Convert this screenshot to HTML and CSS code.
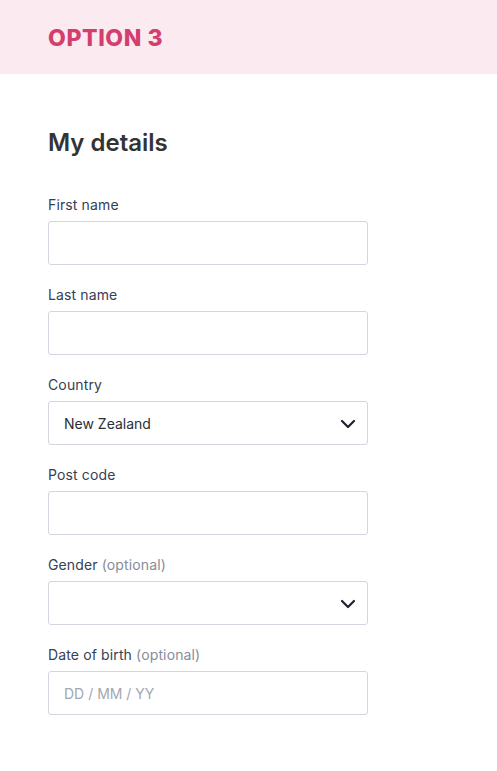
FILE: index.html
```html
<!DOCTYPE html>
<html lang="en">
<head>
<meta charset="utf-8">
<title>Option 3</title>
<link rel="stylesheet" href="styles.css">
</head>
<body>
<header class="banner">
  <h1 class="banner-title">OPTION 3</h1>
</header>
<main class="content">
  <h2 class="heading">My details</h2>
  <form class="form">
    <div class="field">
      <label class="label">First name</label>
      <div class="input"></div>
    </div>
    <div class="field">
      <label class="label">Last name</label>
      <div class="input"></div>
    </div>
    <div class="field">
      <label class="label">Country</label>
      <div class="input select">
        <span class="value">New Zealand</span>
        <svg class="chevron" width="16" height="10" viewBox="0 0 16 10"><path d="M2 2 L8 8 L14 2" fill="none" stroke="#1f2330" stroke-width="2.2" stroke-linecap="round" stroke-linejoin="round"/></svg>
      </div>
    </div>
    <div class="field">
      <label class="label">Post code</label>
      <div class="input"></div>
    </div>
    <div class="field">
      <label class="label">Gender <span class="optional">(optional)</span></label>
      <div class="input select">
        <span class="value"></span>
        <svg class="chevron" width="16" height="10" viewBox="0 0 16 10"><path d="M2 2 L8 8 L14 2" fill="none" stroke="#1f2330" stroke-width="2.2" stroke-linecap="round" stroke-linejoin="round"/></svg>
      </div>
    </div>
    <div class="field">
      <label class="label">Date of birth <span class="optional">(optional)</span></label>
      <div class="input"><span class="placeholder">DD / MM / YY</span></div>
    </div>
  </form>
</main>
</body>
</html>
```
FILE: styles.css
```css
* { box-sizing: border-box; }
html, body { margin: 0; padding: 0; background: #ffffff; }
body { font-family: Inter, "Noto Sans", sans-serif; color: #333333; }

.banner {
  background: #fbeaf0;
  height: 74px;
  padding: 0 48px;
  display: flex;
  align-items: center;
}
.banner-title {
  margin: 0;
  font-size: 23px;
  font-weight: 800;
  color: #d23f6e;
  letter-spacing: 0.6px;
  line-height: 1;
  padding-top: 2px;
}

.content { padding: 53px 48px 0; }
.heading {
  margin: 0 0 36px;
  font-size: 24px;
  font-weight: 600;
  color: #333333;
  line-height: 32px;
}

.form { display: flex; flex-direction: column; gap: 20px; width: 320px; }
.field { display: flex; flex-direction: column; gap: 6px; }
.label {
  font-size: 14px;
  line-height: 20px;
  color: #364055;
  font-weight: 400;
  letter-spacing: 0.13px;
}
.optional { color: #868c9a; }

.input {
  height: 44px;
  border: 1px solid #d3d5df;
  border-radius: 3px;
  background: #fff;
  display: flex;
  align-items: center;
  padding: 0 15px;
  font-size: 14px;
  color: #2b2f38;
}
.select { justify-content: space-between; padding-right: 11px; }
.placeholder { color: #a3a7b2; }
.chevron { display: block; margin-top: 1px; }
```
